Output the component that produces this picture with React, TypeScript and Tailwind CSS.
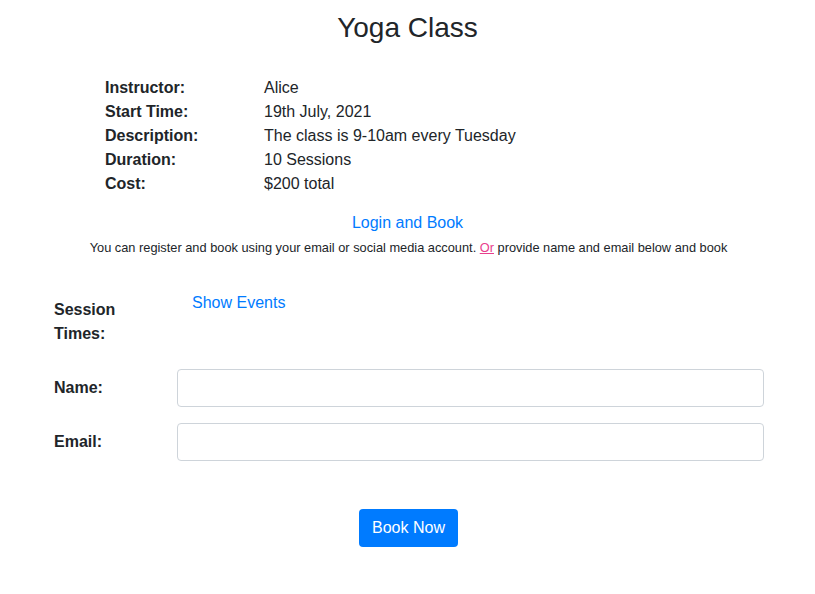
const details = [
  { label: "Instructor:", value: "Alice" },
  { label: "Start Time:", value: "19th July, 2021" },
  { label: "Description:", value: "The class is 9-10am every Tuesday" },
  { label: "Duration:", value: "10 Sessions" },
  { label: "Cost:", value: "$200 total" },
];

export default function App() {
  return (
    <div className="min-h-[594px] bg-white font-['Liberation_Sans',Arial,sans-serif] text-[16px] leading-6 text-[#212529]">
      <h3 className="pt-[11px] text-center text-[28px] leading-[34px] font-normal">Yoga Class</h3>

      <div className="mt-[31px] pl-[105px]">
        {details.map((d) => (
          <div key={d.label} className="flex">
            <div className="w-[159px] font-bold">{d.label}</div>
            <div>{d.value}</div>
          </div>
        ))}
      </div>

      <div className="mt-[15px] text-center">
        <a href="#" className="text-[#007bff]">Login and Book</a>
      </div>
      <div className="mt-[3px] pl-[2px] text-center text-[12.8px] leading-[19px]">
        You can register and book using your email or social media account.{" "}
        <a href="#" className="text-[#e83e8c] underline">Or</a> provide name and email below and book
      </div>

      <div className="mt-[34px] pl-[54px] pr-[51px]">
        <div className="flex">
          <div className="w-[108px] pt-[7px] pb-[7px] font-bold">Session Times:</div>
          <div className="ml-[30px]">
            <a href="#" className="text-[#007bff]">Show Events</a>
          </div>
        </div>

        <div className="mt-[16px] flex items-center">
          <label className="w-[123px] font-bold">Name:</label>
          <input className="h-[38px] flex-1 rounded border border-[#ced4da] px-3" />
        </div>
        <div className="mt-[16px] flex items-center">
          <label className="w-[123px] font-bold">Email:</label>
          <input className="h-[38px] flex-1 rounded border border-[#ced4da] px-3" />
        </div>

        <div className="mt-[48px] flex justify-center pr-[1px]">
          <button className="h-[38px] rounded bg-[#007bff] px-[13px] text-white">Book Now</button>
        </div>
      </div>
    </div>
  );
}
